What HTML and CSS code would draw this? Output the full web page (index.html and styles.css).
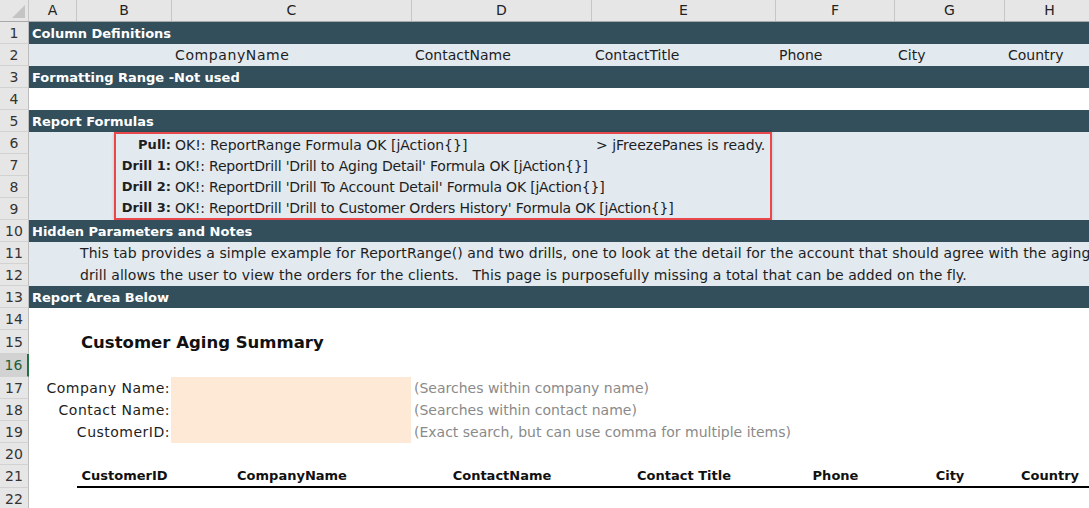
FILE: index.html
```html
<!DOCTYPE html>
<html>
<head>
<meta charset="utf-8">
<link rel="stylesheet" href="styles.css">
</head>
<body>
<div class="sheet">
  <div class="colhead">
    <div class="corner"><span class="tri"></span></div>
    <div class="ch">A</div><div class="ch">B</div><div class="ch">C</div><div class="ch">D</div>
    <div class="ch">E</div><div class="ch">F</div><div class="ch">G</div><div class="ch">H</div>
  </div>

  <div class="row"><div class="rh">1</div><div class="band">Column Definitions</div></div>
  <div class="row"><div class="rh">2</div>
    <div class="cells light">
      <div></div><div></div>
      <div class="c wide-c">CompanyName</div><div class="c">ContactName</div><div class="c">ContactTitle</div>
      <div class="c">Phone</div><div class="c">City</div><div class="c">Country</div>
    </div>
  </div>
  <div class="row"><div class="rh">3</div><div class="band">Formatting Range -Not used</div></div>
  <div class="row"><div class="rh">4</div><div class="blank"></div></div>
  <div class="row"><div class="rh">5</div><div class="band">Report Formulas</div></div>

  <div class="group">
    <div class="rhs">
      <div class="rh">6</div><div class="rh">7</div><div class="rh">8</div><div class="rh">9</div>
    </div>
    <div class="formulas">
      <div class="box">
        <div class="fl"><span class="lbl">Pull:</span><span class="txt">OK!: ReportRange Formula OK [jAction{}]</span><span class="side">&gt; jFreezePanes is ready.</span></div>
        <div class="fl"><span class="lbl">Drill 1:</span><span class="txt wide">OK!: ReportDrill 'Drill to Aging Detail' Formula OK [jAction{}]</span></div>
        <div class="fl"><span class="lbl">Drill 2:</span><span class="txt wide">OK!: ReportDrill 'Drill To Account Detail' Formula OK [jAction{}]</span></div>
        <div class="fl"><span class="lbl">Drill 3:</span><span class="txt wide">OK!: ReportDrill 'Drill to Customer Orders History' Formula OK [jAction{}]</span></div>
      </div>
    </div>
  </div>

  <div class="row"><div class="rh">10</div><div class="band">Hidden Parameters and Notes</div></div>
  <div class="row"><div class="rh">11</div><div class="note light">This tab provides a simple example for ReportRange() and two drills, one to look at the detail for the account that should agree with the aging, and the other</div></div>
  <div class="row"><div class="rh">12</div><div class="note light">drill allows the user to view the orders for the clients. &nbsp; This page is purposefully missing a total that can be added on the fly.</div></div>
  <div class="row"><div class="rh">13</div><div class="band">Report Area Below</div></div>
  <div class="row"><div class="rh">14</div><div class="blank"></div></div>
  <div class="row r15"><div class="rh">15</div><div class="title">Customer Aging Summary</div></div>
  <div class="row r16"><div class="rh sel">16</div><div class="blank"></div></div>

  <div class="group">
    <div class="rhs">
      <div class="rh">17</div><div class="rh">18</div><div class="rh">19</div>
    </div>
    <div class="params">
      <div class="plbl">Company Name:</div><div class="pin"></div><div class="hint">(Searches within company name)</div>
      <div class="plbl">Contact Name:</div><div class="pin"></div><div class="hint">(Searches within contact name)</div>
      <div class="plbl">CustomerID:</div><div class="pin"></div><div class="hint">(Exact search, but can use comma for multiple items)</div>
    </div>
  </div>

  <div class="row"><div class="rh">20</div><div class="blank"></div></div>
  <div class="row r21"><div class="rh">21</div>
    <div class="cells heads">
      <div></div>
      <div class="th">CustomerID</div><div class="th">CompanyName</div><div class="th">ContactName</div>
      <div class="th">Contact Title</div><div class="th">Phone</div><div class="th">City</div><div class="th">Country</div>
    </div>
  </div>
  <div class="row"><div class="rh">22</div><div class="blank"></div></div>
</div>
</body>
</html>
```

FILE: styles.css
```css
html, body {
  margin: 0;
  padding: 0;
  background: #ffffff;
  overflow: hidden;
}

.sheet {
  width: 1095px;
  font-family: "DejaVu Sans", sans-serif;
  font-size: 14px;
  color: #1e1e1e;
}

.colhead {
  display: grid;
  grid-template-columns: 29px 48px 95px 240px 180px 184px 119px 110px 90px;
  height: 21px;
  background: #e6e6e6;
  border-bottom: 1px solid #a9a9a9;
}

.corner {
  position: relative;
  border-right: 1px solid #c6c6c6;
}

.tri {
  position: absolute;
  right: 3px;
  bottom: 3px;
  width: 0;
  height: 0;
  border-left: 13px solid transparent;
  border-bottom: 13px solid #c4c4c4;
}

.ch {
  border-right: 1px solid #c6c6c6;
  text-align: center;
  line-height: 21px;
  color: #222;
  font-size: 14px;
}

.row {
  display: flex;
  height: 22px;
}

.r15 { height: 24px; }
.r16 { height: 23px; }
.r21 { height: 23px; }

.rh {
  width: 29px;
  flex: none;
  box-sizing: border-box;
  height: 100%;
  background: #e6e6e6;
  border-right: 1px solid #bdbdbd;
  border-bottom: 1px solid #d2d2d2;
  font-size: 14px;
  color: #333;
  display: flex;
  align-items: center;
  justify-content: center;
}

.rh.sel {
  background: #d2d2d2;
  border-right: 2px solid #217346;
  color: #1d5f3b;
}

.band {
  flex: 1;
  background: #334f5c;
  color: #ffffff;
  font-weight: bold;
  font-size: 13px;
  padding-left: 3px;
  display: flex;
  align-items: center;
  white-space: nowrap;
}

.blank { flex: 1; }

.light { background: #e2e9ef; }

.cells {
  flex: 1;
  display: grid;
  grid-template-columns: 48px 95px 240px 180px 184px 119px 110px 90px;
  align-items: center;
}

.c {
  padding-left: 3px;
  white-space: nowrap;
}

.c.wide-c { letter-spacing: 0.6px; }

.note {
  flex: 1;
  padding-left: 51px;
  display: flex;
  align-items: center;
  white-space: nowrap;
  overflow: hidden;
  letter-spacing: 0.08px;
}

.group {
  display: flex;
}

.rhs {
  display: flex;
  flex-direction: column;
}

.rhs .rh { height: 22px; }

.formulas {
  flex: 1;
  background: #e2e9ef;
  padding-left: 85px;
}

.box {
  width: 658px;
  height: 88px;
  box-sizing: border-box;
  border: 2px solid #e8474b;
  box-shadow: 0 0 3px rgba(0, 0, 0, 0.18);
  display: flex;
  flex-direction: column;
}

.fl {
  display: grid;
  grid-template-columns: 55px 425px 1fr;
  height: 21px;
  align-items: center;
  white-space: nowrap;
}

.lbl {
  font-weight: bold;
  font-size: 13px;
  text-align: right;
}

.txt { padding-left: 4px; }
.txt.wide { grid-column: 2 / 4; letter-spacing: -0.2px; }

.title {
  flex: 1;
  padding-left: 52px;
  font-size: 16.5px;
  font-weight: bold;
  color: #111;
  display: flex;
  align-items: center;
}

.params {
  flex: 1;
  display: grid;
  grid-template-columns: 142px 240px 1fr;
  grid-auto-rows: 22px;
  align-items: stretch;
}

.plbl {
  padding-right: 1px;
  display: flex;
  align-items: center;
  justify-content: flex-end;
  white-space: nowrap;
  letter-spacing: 0.5px;
}

.pin { background: #fde9d5; }

.hint {
  color: #8a8a8a;
  padding-left: 3px;
  display: flex;
  align-items: center;
  white-space: nowrap;
}

.heads {
  height: 100%;
}

.heads .th {
  font-weight: bold;
  font-size: 13px;
  text-align: center;
  white-space: nowrap;
  color: #111;
  height: 21px;
  line-height: 21px;
  border-bottom: 2px solid #000;
}
```
